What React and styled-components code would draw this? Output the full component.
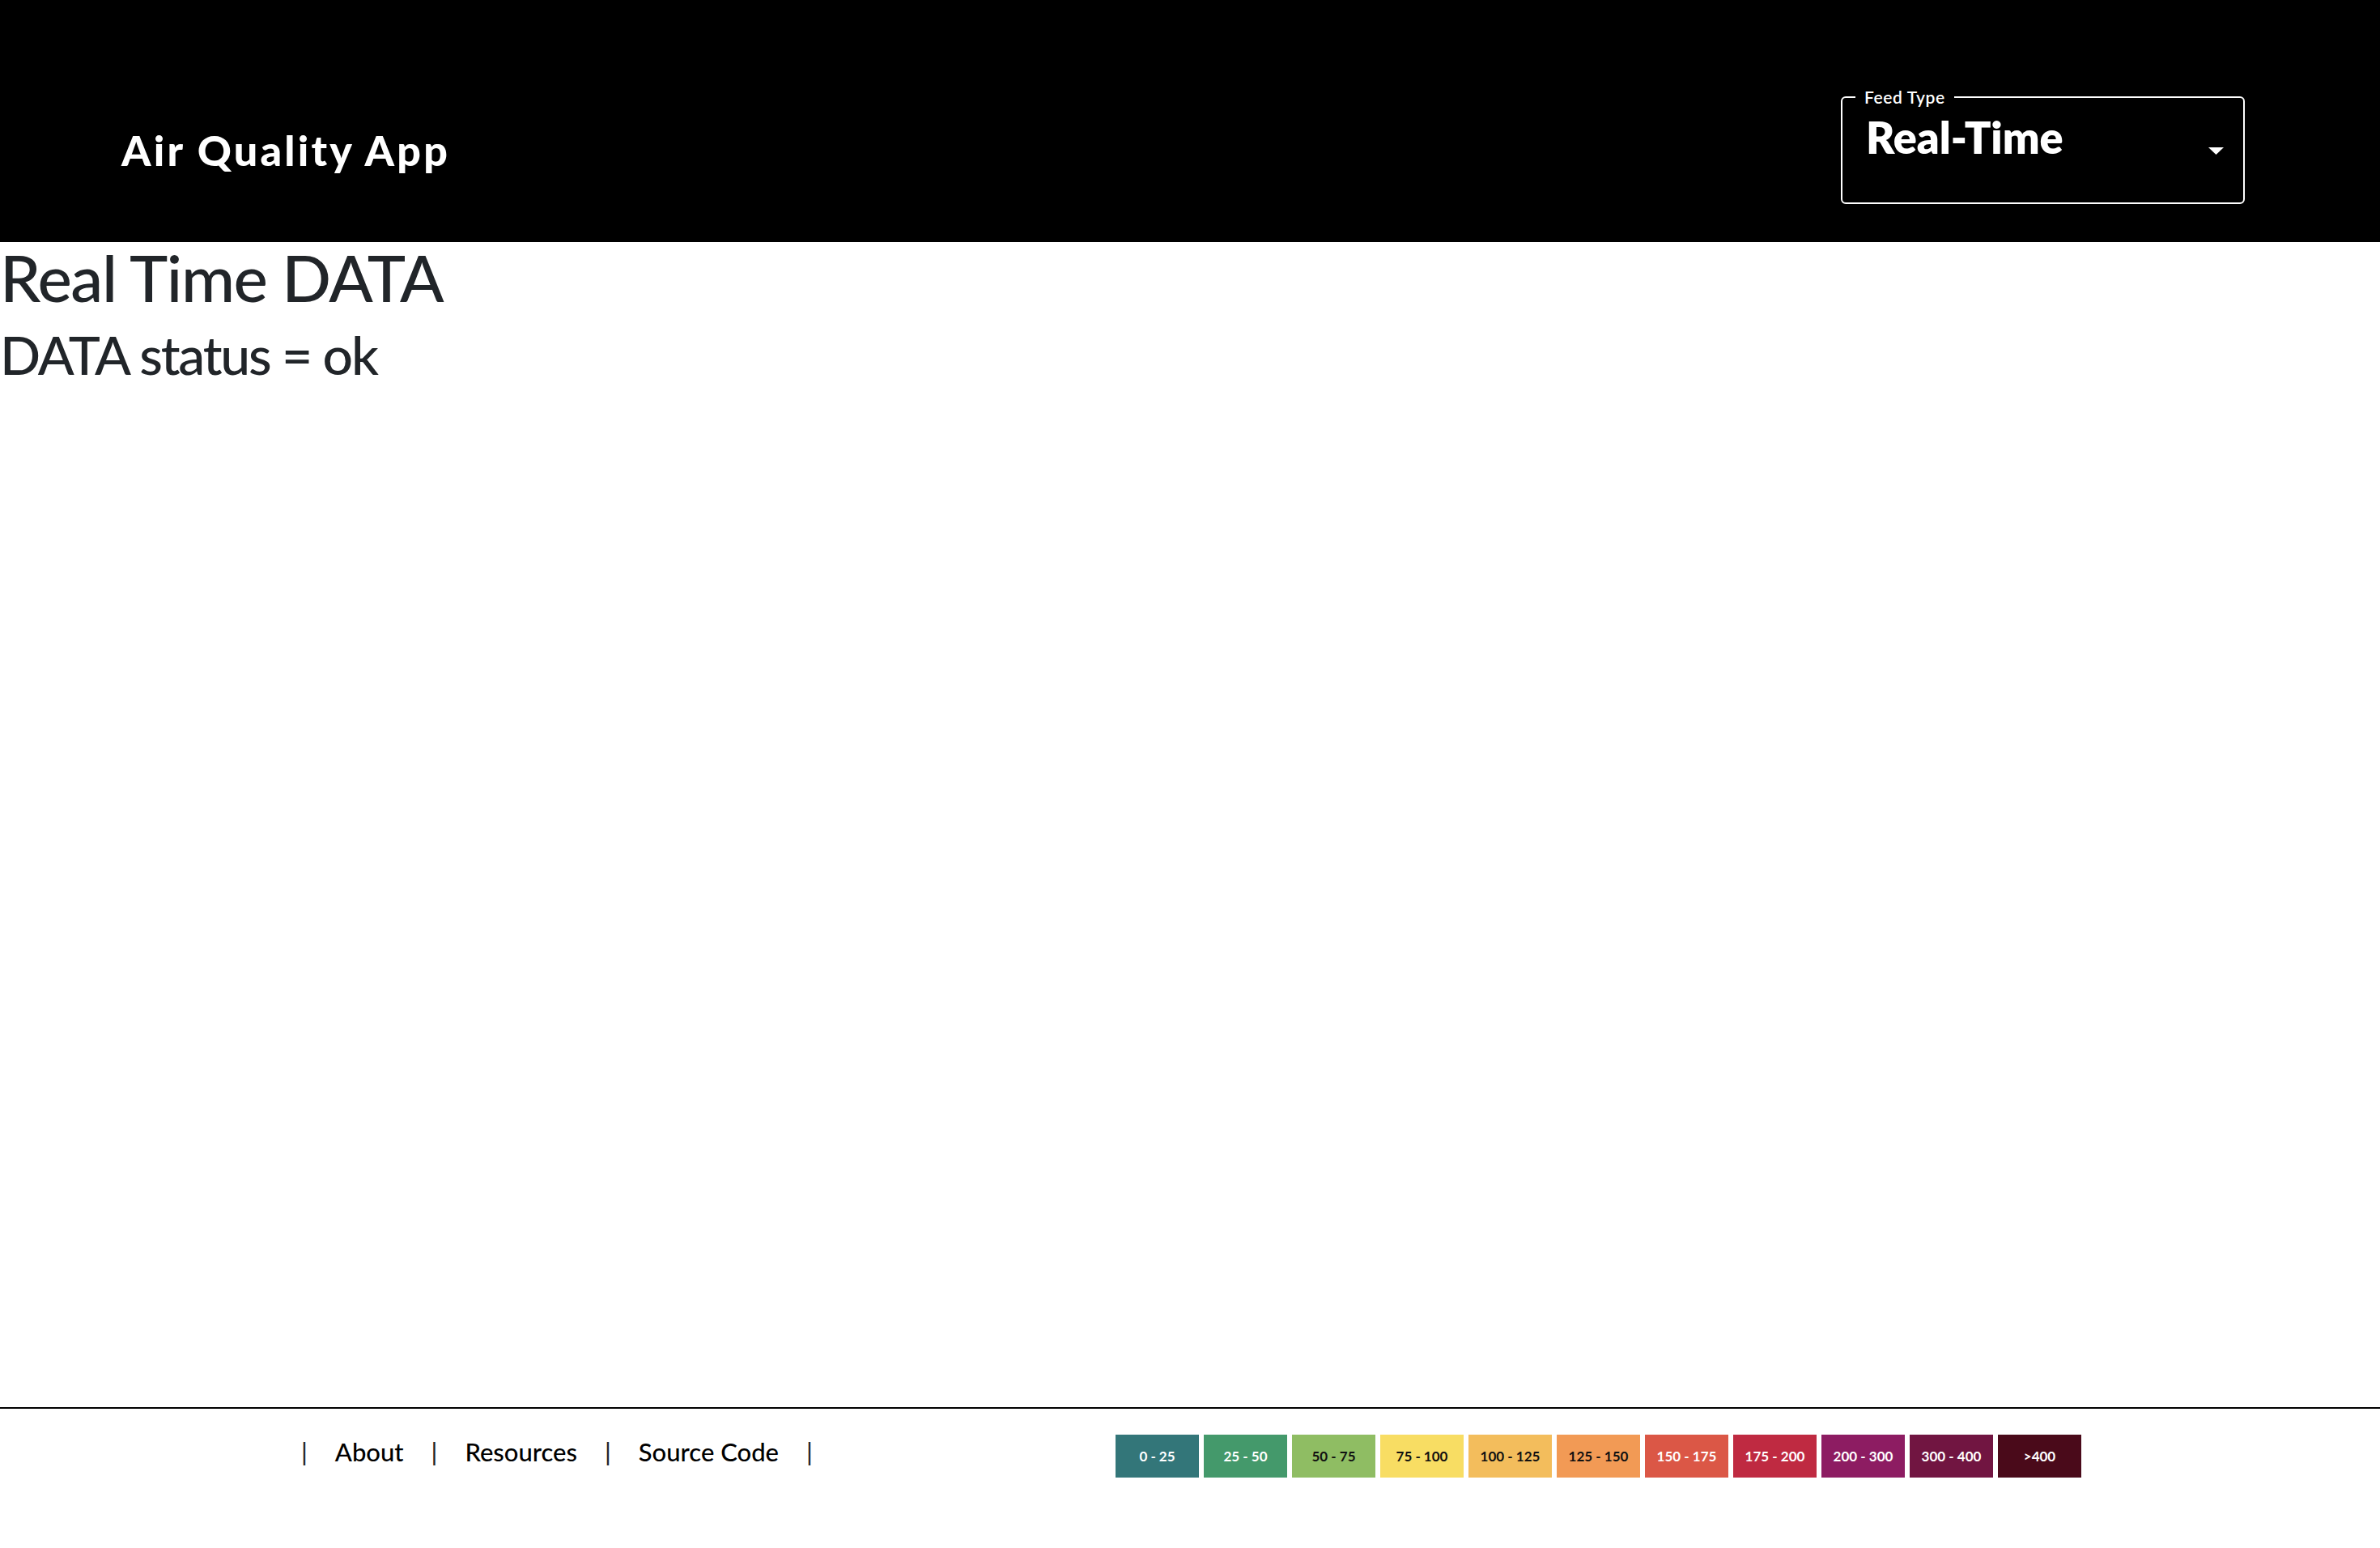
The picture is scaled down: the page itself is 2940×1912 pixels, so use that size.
import React from "react";
import { styled, createGlobalStyle } from "styled-components";

const GlobalStyle = createGlobalStyle`
  html, body {
    margin: 0;
    padding: 0;
    background: #fff;
  }
  body {
    font-family: "Lato", "Liberation Sans", sans-serif;
    color: #212529;
  }
  * {
    box-sizing: border-box;
  }
`;

const levels = [
  { label: "0 - 25", bg: "#337679", fg: "#fff" },
  { label: "25 - 50", bg: "#44996b", fg: "#fff" },
  { label: "50 - 75", bg: "#8fbd63", fg: "#111" },
  { label: "75 - 100", bg: "#f8dd63", fg: "#111" },
  { label: "100 - 125", bg: "#f3bd5c", fg: "#111" },
  { label: "125 - 150", bg: "#f29a55", fg: "#111" },
  { label: "150 - 175", bg: "#db5746", fg: "#fff" },
  { label: "175 - 200", bg: "#bf2a41", fg: "#fff" },
  { label: "200 - 300", bg: "#8d1c62", fg: "#fff" },
  { label: "300 - 400", bg: "#711541", fg: "#fff" },
  { label: ">400", bg: "#4a0a1a", fg: "#fff" },
];

const links = ["About", "Resources", "Source Code"];

function App() {
  return (
    <Page>
      <GlobalStyle />
      <Header>
        <Title>Air Quality App</Title>
        <SelectBox>
          <SelectLabel>Feed Type</SelectLabel>
          <SelectValue>Real-Time</SelectValue>
          <Arrow width="19" height="9" viewBox="0 0 19 9">
            <polygon points="0,0 19,0 9.5,9" fill="#fff" />
          </Arrow>
        </SelectBox>
      </Header>

      <Main>
        <Heading>Real Time DATA</Heading>
        <SubHeading>DATA status = ok</SubHeading>
      </Main>

      <Footer>
        <Nav>
          <Sep>|</Sep>
          {links.map((l) => (
            <React.Fragment key={l}>
              <NavLink href="#">{l}</NavLink>
              <Sep>|</Sep>
            </React.Fragment>
          ))}
        </Nav>
        <Legend>
          {levels.map((lv) => (
            <LegendItem key={lv.label} $bg={lv.bg} $fg={lv.fg}>
              {lv.label}
            </LegendItem>
          ))}
        </Legend>
      </Footer>
    </Page>
  );
}

export default App;

const Page = styled.div`
  min-height: 100vh;
  display: flex;
  flex-direction: column;
`;

const Header = styled.header`
  height: 299px;
  background: #000;
  display: flex;
  align-items: center;
  justify-content: space-between;
  padding: 72px 167px 0 150px;
`;

const Title = styled.h1`
  margin: 0;
  color: #fff;
  font-size: 52px;
  font-weight: 900;
  line-height: 1.2;
  letter-spacing: 3.2px;
`;

const SelectBox = styled.div`
  position: relative;
  width: 499px;
  height: 133px;
  border: 2px solid #fff;
  border-radius: 6px;
  display: flex;
  align-items: flex-start;
  justify-content: space-between;
  padding: 22px 24px 0 29px;
`;

const SelectLabel = styled.span`
  position: absolute;
  top: -14px;
  left: 16px;
  padding: 0 11px;
  background: #000;
  color: #fff;
  font-size: 21px;
  font-weight: 600;
  line-height: 25px;
  letter-spacing: 0.6px;
`;

const SelectValue = styled.div`
  color: #fff;
  font-size: 54px;
  font-weight: 800;
  line-height: 1;
`;

const Arrow = styled.svg`
  margin-top: 39px;
  flex-shrink: 0;
`;

const Main = styled.main`
  flex: 1;
`;

const Heading = styled.h1`
  margin: 0 0 23px;
  font-size: 80px;
  font-weight: 500;
  line-height: 1;
  letter-spacing: -1.4px;
  padding-top: 3px;
`;

const SubHeading = styled.h2`
  margin: 0;
  font-size: 66px;
  font-weight: 500;
  line-height: 1;
  letter-spacing: -2.2px;
`;

const Footer = styled.footer`
  border-top: 2px solid #000;
  display: flex;
  align-items: flex-start;
  justify-content: space-between;
  padding: 32px 369px 87px 372px;
`;

const Nav = styled.nav`
  display: flex;
  align-items: center;
  gap: 34px;
  margin-top: 6px;
  font-size: 31px;
  line-height: 1;
  color: #212529;
`;

const Sep = styled.span`
  font-weight: 500;
  color: #212529;
`;

const NavLink = styled.a`
  color: #000;
  text-decoration: none;
  font-weight: 500;
`;

const Legend = styled.div`
  display: flex;
  gap: 6px;
`;

const LegendItem = styled.div`
  width: 103px;
  height: 53px;
  display: flex;
  align-items: center;
  justify-content: center;
  background: ${(p) => p.$bg};
  color: ${(p) => p.$fg};
  font-size: 17px;
  font-weight: 700;
`;
